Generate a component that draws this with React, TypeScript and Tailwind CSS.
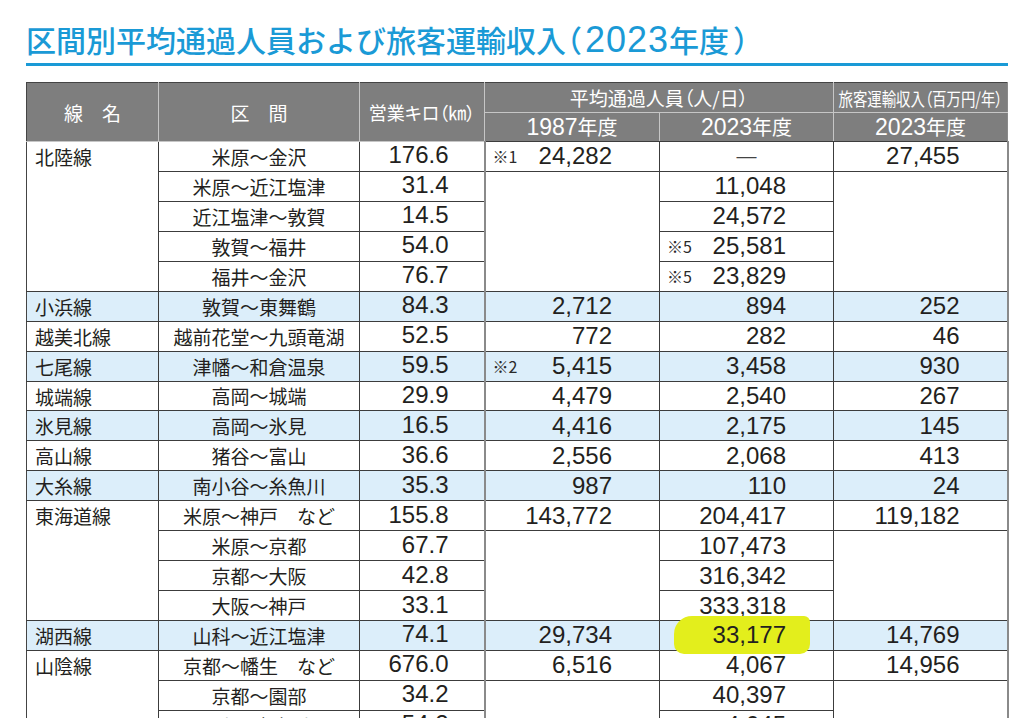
type Cell = { v: string; note?: string; span?: number };

type Row = {
  line?: { name: string; span?: number };
  sec: string;
  km: string;
  p87?: Cell;
  p23: Cell;
  rev?: Cell;
  blue?: boolean;
  hl?: boolean;
};

const rows: Row[] = [
  { line: { name: "北陸線", span: 5 }, sec: "米原〜金沢", km: "176.6", p87: { v: "24,282", note: "※1" }, p23: { v: "—" }, rev: { v: "27,455" } },
  { sec: "米原〜近江塩津", km: "31.4", p87: { v: "", span: 4 }, p23: { v: "11,048" }, rev: { v: "", span: 4 } },
  { sec: "近江塩津〜敦賀", km: "14.5", p23: { v: "24,572" } },
  { sec: "敦賀〜福井", km: "54.0", p23: { v: "25,581", note: "※5" } },
  { sec: "福井〜金沢", km: "76.7", p23: { v: "23,829", note: "※5" } },
  { line: { name: "小浜線" }, sec: "敦賀〜東舞鶴", km: "84.3", p87: { v: "2,712" }, p23: { v: "894" }, rev: { v: "252" }, blue: true },
  { line: { name: "越美北線" }, sec: "越前花堂〜九頭竜湖", km: "52.5", p87: { v: "772" }, p23: { v: "282" }, rev: { v: "46" } },
  { line: { name: "七尾線" }, sec: "津幡〜和倉温泉", km: "59.5", p87: { v: "5,415", note: "※2" }, p23: { v: "3,458" }, rev: { v: "930" }, blue: true },
  { line: { name: "城端線" }, sec: "高岡〜城端", km: "29.9", p87: { v: "4,479" }, p23: { v: "2,540" }, rev: { v: "267" } },
  { line: { name: "氷見線" }, sec: "高岡〜氷見", km: "16.5", p87: { v: "4,416" }, p23: { v: "2,175" }, rev: { v: "145" }, blue: true },
  { line: { name: "高山線" }, sec: "猪谷〜富山", km: "36.6", p87: { v: "2,556" }, p23: { v: "2,068" }, rev: { v: "413" } },
  { line: { name: "大糸線" }, sec: "南小谷〜糸魚川", km: "35.3", p87: { v: "987" }, p23: { v: "110" }, rev: { v: "24" }, blue: true },
  { line: { name: "東海道線", span: 4 }, sec: "米原〜神戸　など", km: "155.8", p87: { v: "143,772" }, p23: { v: "204,417" }, rev: { v: "119,182" } },
  { sec: "米原〜京都", km: "67.7", p87: { v: "", span: 3 }, p23: { v: "107,473" }, rev: { v: "", span: 3 } },
  { sec: "京都〜大阪", km: "42.8", p23: { v: "316,342" } },
  { sec: "大阪〜神戸", km: "33.1", p23: { v: "333,318" } },
  { line: { name: "湖西線" }, sec: "山科〜近江塩津", km: "74.1", p87: { v: "29,734" }, p23: { v: "33,177" }, rev: { v: "14,769" }, blue: true, hl: true },
  { line: { name: "山陰線", span: 3 }, sec: "京都〜幡生　など", km: "676.0", p87: { v: "6,516" }, p23: { v: "4,067" }, rev: { v: "14,956" } },
  { sec: "京都〜園部", km: "34.2", p87: { v: "", span: 2 }, p23: { v: "40,397" }, rev: { v: "", span: 2 } },
  { sec: "園部〜福知山", km: "54.2", p23: { v: "4,045" } },
];

const jp = "font-['Noto_Sans_CJK_JP',sans-serif]";
const palt = "[font-feature-settings:'palt']";
const num = "font-['Liberation_Sans','Noto_Sans_CJK_JP',sans-serif] text-[24px] leading-none text-[#231f20]";
const td = "border border-[#3c3c3c] p-0 align-middle";
const th = "border border-[#c6c6c6] bg-[#7e7e7e] p-0 font-normal text-white align-middle leading-none";

function NumCell({ cell, className = "" }: { cell: Cell; className?: string }) {
  if (cell.v === "—") {
    return (
      <div className={`flex justify-center ${className}`}>
        <span className="font-['Liberation_Sans',sans-serif] text-[20px] leading-none text-[#444]">—</span>
      </div>
    );
  }
  return (
    <div className={`flex items-center ${cell.note ? "justify-between" : "justify-end"} pl-[7px] pr-[47px] ${className}`}>
      {cell.note && <span className={`${jp} text-[16px] leading-none text-[#2a2a2a]`}>{cell.note}</span>}
      <span className={num}>{cell.v}</span>
    </div>
  );
}

export default function App() {
  return (
    <div className="h-[718px] overflow-hidden bg-white">
      <div className="px-[26px] pt-[22px]">
        <h1 className={`${jp} h-[30px] whitespace-nowrap text-[30px] font-medium leading-[30px] text-[#1a9ad6]`}>
          区間別平均通過人員および旅客運輸収入
          <span className={`${palt} mr-[4px]`}>（</span>
          <span className="font-['Liberation_Sans',sans-serif] text-[36px] leading-none tracking-[1px]">2023</span>
          年度
          <span className="ml-[4px]">）</span>
        </h1>
        <div className="mt-[11px] h-[3px] w-[982px] bg-[#1a9ad6]" />

        <table className="mt-[16px] w-[981px] table-fixed border-collapse">
          <colgroup>
            <col className="w-[132px]" />
            <col className="w-[201px]" />
            <col className="w-[125px]" />
            <col className="w-[175px]" />
            <col className="w-[174px]" />
            <col className="w-[174px]" />
          </colgroup>
          <thead>
            <tr className="h-[30px]">
              <th rowSpan={2} className={`${th} border-l-[#444] border-t-[#444] ${jp} text-[19px]`}>
                線　名
              </th>
              <th rowSpan={2} className={`${th} border-t-[#444] ${jp} text-[19px]`}>
                区　間
              </th>
              <th rowSpan={2} className={`${th} border-t-[#444] ${jp} ${palt} text-[18px]`}>
                営業キロ（㎞）
              </th>
              <th colSpan={2} className={`${th} border-t-[#444] ${jp} ${palt} text-[19px]`}>
                平均通過人員（人/日）
              </th>
              <th className={`${th} border-r-[#8a8a8a] border-t-[#444] ${jp} ${palt} text-[18px]`}>
                <div className="flex justify-center">
                  <span className="inline-block shrink-0 origin-center scale-x-[0.8] whitespace-nowrap">旅客運輸収入（百万円/年）</span>
                </div>
              </th>
            </tr>
            <tr className="h-[29px]">
              {["1987", "2023", "2023"].map((y, i) => (
                <th key={i} className={`${th} ${i === 2 ? "border-r-[#8a8a8a]" : ""} border-b-[#3c3c3c]`}>
                  <span className="font-['Liberation_Sans',sans-serif] text-[23px]">{y}</span>
                  <span className={`${jp} text-[20px]`}>年度</span>
                </th>
              ))}
            </tr>
          </thead>
          <tbody>
            {rows.map((r, i) => (
              <tr key={i} className={`h-[29.94px] ${r.blue ? "bg-[#dceefa]" : "bg-white"}`}>
                {r.line && (
                  <td rowSpan={r.line.span ?? 1} className={`${td} border-l-[#444] pl-[8px] pt-[5px] align-top ${jp} text-[19px] leading-none text-[#231f20]`}>
                    {r.line.name}
                  </td>
                )}
                <td className={`${td} text-center ${jp} text-[19px] leading-none text-[#231f20]`}>{r.sec}</td>
                <td className={`${td} pr-[35px] text-right`}>
                  <span className={num}>{r.km}</span>
                </td>
                {r.p87 && (
                  <td rowSpan={r.p87.span ?? 1} className={`${td} border-l-2 border-l-[#8a8a8a]`}>
                    {r.p87.v && <NumCell cell={r.p87} />}
                  </td>
                )}
                <td className={`${td} relative`}>
                  {r.hl && (
                    <div className="pointer-events-none absolute bottom-[-4px] left-[14px] right-[23px] top-[-5px] rounded-b-[10px] rounded-tl-[18px] rounded-tr-[6px] bg-[#e3ee1c]" />
                  )}
                  <NumCell cell={r.p23} className="relative" />
                </td>
                {r.rev && (
                  <td rowSpan={r.rev.span ?? 1} className={`${td} border-r-2 border-r-[#8a8a8a]`}>
                    {r.rev.v && <NumCell cell={r.rev} />}
                  </td>
                )}
              </tr>
            ))}
          </tbody>
        </table>
      </div>
    </div>
  );
}
